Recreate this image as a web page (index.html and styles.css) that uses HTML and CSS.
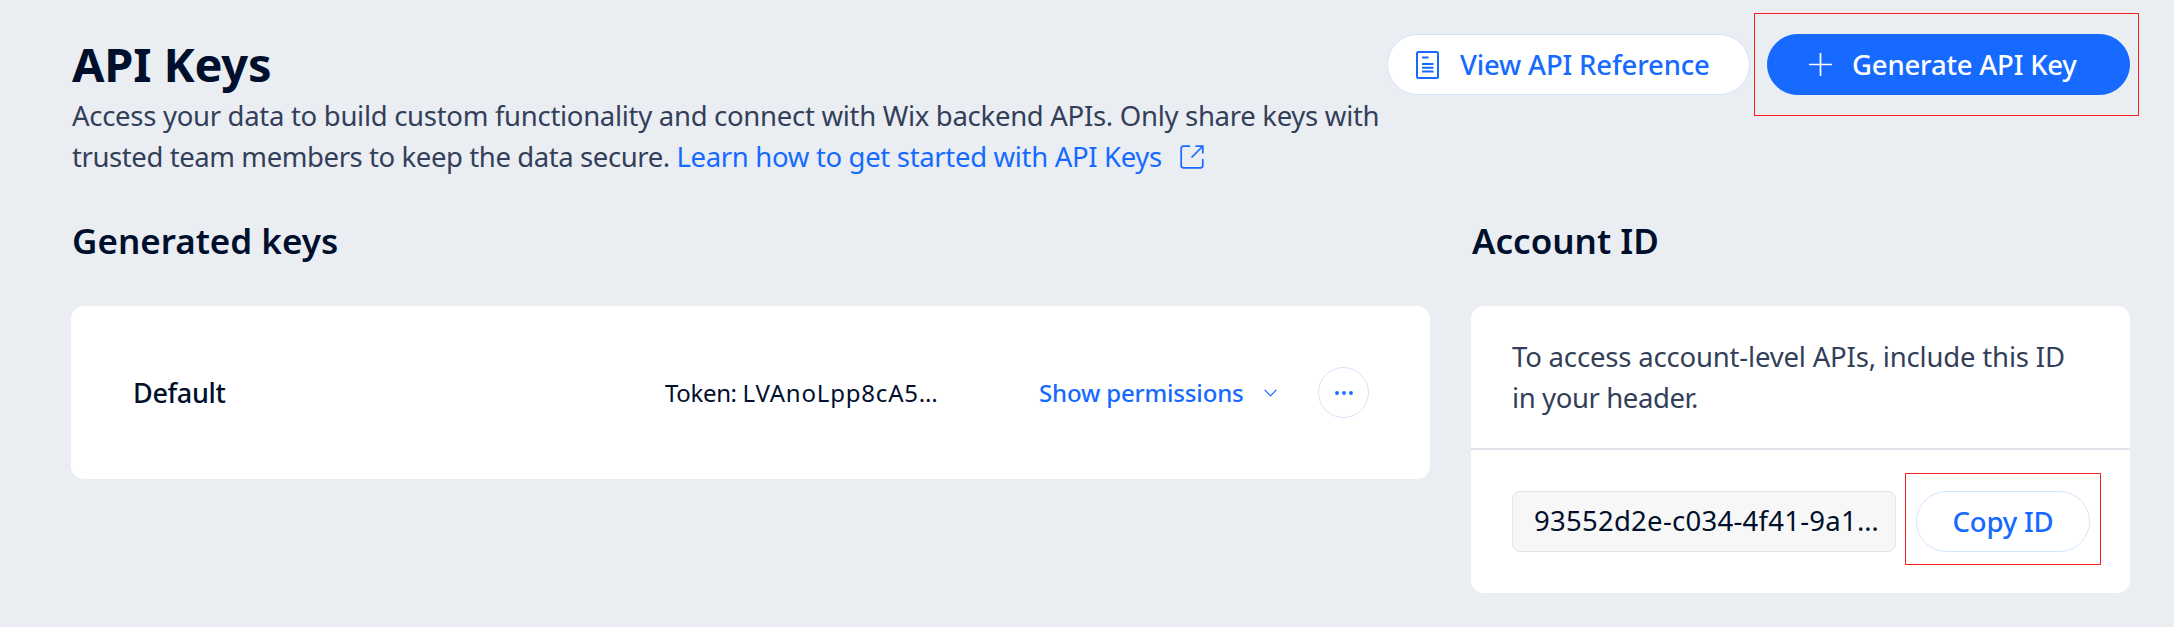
FILE: index.html
```html
<!DOCTYPE html>
<html lang="en">
<head>
<meta charset="utf-8">
<title>API Keys</title>
<link rel="stylesheet" href="styles.css">
</head>
<body>
<main class="page">
  <header class="header">
    <div class="intro">
      <h1 class="title">API Keys</h1>
      <p class="lead"><span class="lead-a">Access your data to build custom functionality and connect with Wix backend APIs. Only share keys with</span><br><span class="lead-b">trusted team members to keep the data secure. </span><a class="link">Learn how to get started with API Keys</a><svg class="external" width="24" height="24" viewBox="0 0 24 24"><path d="M10 1.2H3.5Q1.2 1.2 1.2 3.5V20.500Q1.200 22.800 3.500 22.800H20.500Q22.800 22.800 22.800 20.500V14M15.500 1.200H22.800V8.500M22.500 1.500L11.500 12.500"/></svg></p>
    </div>
    <div class="actions">
      <button class="btn btn-view"><svg class="doc" width="23" height="28" viewBox="0 0 23 28"><rect x="1" y="1" width="21" height="26" rx="1.500"/><path d="M6 6.500H12.500M6 13H17.500M6 16.700H17.500M6 20.500H17.500"/></svg><span>View API Reference</span></button>
      <div class="marked mark-generate"><button class="btn btn-generate"><svg class="plus" width="23" height="23" viewBox="0 0 23 23"><path d="M11.500 0V23M0 11.500H23"/></svg><span>Generate API Key</span></button></div>
    </div>
  </header>
  <div class="columns">
    <section>
      <h2 class="heading">Generated keys</h2>
      <div class="card key-row">
        <span class="key-name">Default</span>
        <span class="key-token"><span class="token-label">Token: </span>LVAnoLpp8cA5…</span>
        <span class="key-permissions">Show permissions</span>
        <svg class="chevron" width="13" height="8" viewBox="0 0 13 8"><path d="M.7.900L6.500 6.800L12.300.900"/></svg>
        <button class="more"><svg width="18" height="4" viewBox="0 0 18 4"><circle cx="2" cy="2" r="1.900"/><circle cx="9" cy="2" r="1.900"/><circle cx="16" cy="2" r="1.900"/></svg></button>
      </div>
    </section>
    <section>
      <h2 class="heading">Account ID</h2>
      <div class="card">
        <p class="note">To access account-level APIs, include this ID<br><span class="note-end">in your header.</span></p>
        <div class="id-row">
          <div class="id-field">93552d2e-c034-4f41-9a1…</div>
          <div class="marked mark-copy"><button class="btn btn-copy">Copy ID</button></div>
        </div>
      </div>
    </section>
  </div>
</main>
</body>
</html>
```
FILE: styles.css
```css
* { box-sizing: border-box; }
body {
  margin: 0;
  min-height: 627px;
  background: #eaeef3;
  color: #000f2b;
  font-family: "Noto Sans", "Open Sans", sans-serif;
  font-size: 27.5px;
}
h1, h2, p { margin: 0; font-weight: inherit; }
button { font: inherit; letter-spacing: inherit; padding: 0; cursor: pointer; }
svg { display: block; flex: none; fill: none; stroke: #166aff; stroke-width: 1.7; }
.page { padding: 34px 44px 0 71px; white-space: nowrap; }
.header { display: flex; justify-content: space-between; height: 179px; }
.intro { width: 1316px; padding-left: 1px; }
.title { font-size: 47px; font-weight: 700; line-height: 61px; letter-spacing: -.2px; }
.lead { line-height: 41px; color: #333f59; }
.lead-a { letter-spacing: -.295px; }
.lead-b { letter-spacing: -.41px; }
.link { color: #166aff; letter-spacing: -.33px; }
.external { display: inline-block; margin-left: 18px; vertical-align: -2px; }
.actions { display: flex; align-items: flex-start; gap: 17px; }
.btn {
  display: flex;
  align-items: center;
  height: 61px;
  border: 1px solid #d3e3fe;
  border-radius: 31px;
  background: #fff;
  color: #166aff;
  font-weight: 500;
  letter-spacing: -.17px;
}
.doc { stroke-width: 2; }
.btn-view { width: 363px; padding-left: 28px; gap: 21px; }
.btn-generate { width: 363px; padding-left: 41px; gap: 20px; background: #166aff; border-color: #166aff; color: #fff; letter-spacing: -.2px; }
.plus { stroke: #fff; }
.marked { position: relative; }
.marked::after { content: ""; position: absolute; border: 1px solid #f9201f; pointer-events: none; }
.mark-generate::after { inset: -21px -9px -21px -13px; }
.mark-copy::after { inset: -18px -11px -13px -11px; }
.columns { display: grid; grid-template-columns: 1359px 659px; gap: 41px; align-items: start; }
.heading { height: 93px; padding-left: 1px; font-size: 35px; font-weight: 600; line-height: 56px; }
.card { border-radius: 13px; background: #fff; }
.key-row { display: flex; align-items: center; height: 173px; padding-left: 62px; }
.key-name { width: 532px; font-size: 27px; font-weight: 500; letter-spacing: -.35px; }
.key-token { width: 374px; font-size: 24px; letter-spacing: .8px; }
.token-label { letter-spacing: -.35px; }
.key-permissions { width: 225px; font-size: 24px; font-weight: 500; color: #166aff; letter-spacing: -.17px; }
.chevron { stroke-width: 1.2; }
.more {
  display: flex;
  align-items: center;
  justify-content: center;
  width: 51px;
  height: 51px;
  margin-left: 41px;
  border: 1px solid #d3e3fe;
  border-radius: 50%;
  background: #fff;
}
.more svg { fill: #166aff; stroke: none; }
.note { height: 144px; padding: 30px 41px 0; border-bottom: 2px solid #dfe5eb; line-height: 41px; color: #333f59; letter-spacing: -.18px; }
.note-end { letter-spacing: -.4px; }
.id-row { display: flex; align-items: flex-start; gap: 20px; height: 143px; padding: 41px 0 0 41px; }
.id-field { width: 384px; height: 61px; padding-left: 21px; border: 1px solid #dfe5eb; border-radius: 8px; background: #f7f7f7; line-height: 58px; letter-spacing: .26px; }
.btn-copy { width: 174px; justify-content: center; }
```
